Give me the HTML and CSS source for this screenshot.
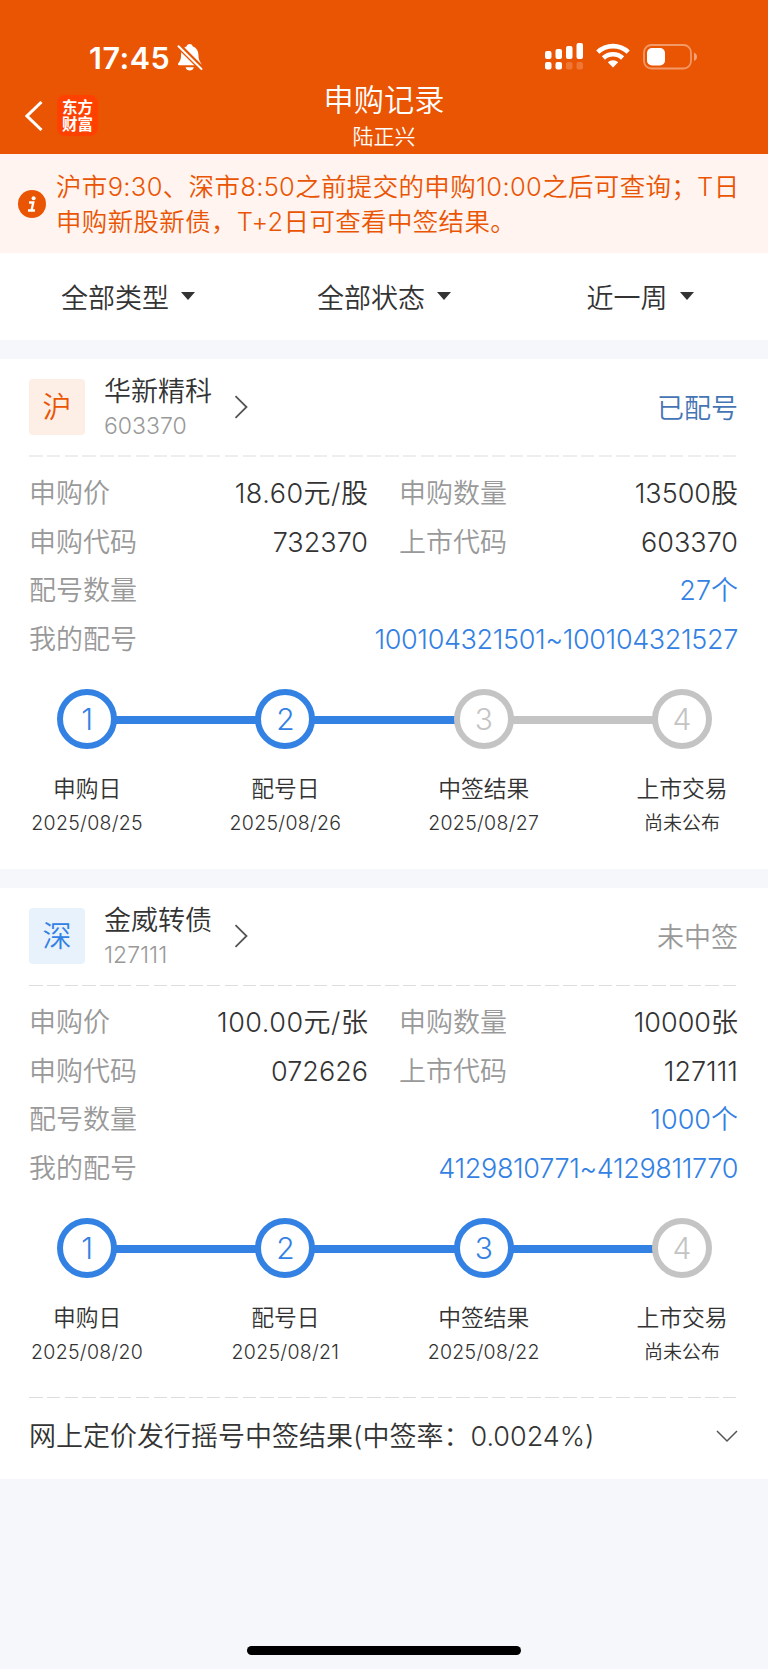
FILE: index.html
```html
<!DOCTYPE html>
<html lang="zh-CN">
<head>
    <meta charset="UTF-8">
    <title>申购记录</title>
    <link rel="stylesheet" href="styles.css">
</head>
<body>
<header class="header">
    <div class="status">
        <div class="status-left">
            <span class="time">17:45</span>
            <svg class="bell" width="26" height="28" viewBox="0 0 26 28">
                <path d="M1 20.500C1 18.500 4 17.500 4 12C4 7 6 3.500 9.500 2.500C10 .8 11.300 0 12.700 0C14.100 0 15.400 .8 15.900 2.500C19.500 3.500 21.500 7 21.500 12C21.500 17.500 24.400 18.500 24.400 20.500Q24.400 21.300 23 21.300H2.400Q1 21.300 1 20.500ZM8.600 23.300H16.800Q16 26.500 12.700 26.500T8.600 23.300Z" fill="#fff"/>
                <path d="M0 0L25 25" stroke="#ea5504" stroke-width="5.500"/>
                <path d="M1.500 2.300L24.500 25" stroke="#fff" stroke-width="2" stroke-linecap="round"/>
            </svg>
        </div>
        <div class="status-right">
            <svg width="38" height="27" viewBox="0 0 38 27" fill="#fff">
                <rect x="0" y="8" width="6.500" height="8" rx="2"/>
                <rect x="10.500" y="6" width="6.500" height="10" rx="2"/>
                <rect x="21" y="3" width="6.500" height="13" rx="2"/>
                <rect x="31.500" y="0" width="6.500" height="16" rx="2"/>
                <rect x="0" y="19" width="6.500" height="7.500" rx="2"/>
                <rect x="10.500" y="19" width="6.500" height="7.500" rx="2"/>
                <rect x="21" y="19" width="6.500" height="7.500" rx="2" opacity=".2"/>
                <rect x="31.500" y="19" width="6.500" height="7.500" rx="2" opacity=".2"/>
            </svg>
            <svg class="wifi" width="34" height="25" viewBox="0 0 34 25" fill="none" stroke="#fff" stroke-width="4.600">
                <path d="M1.800 9.200A22 22 0 0 1 32.200 9.200"/>
                <path d="M7.400 15A14 14 0 0 1 26.600 15"/>
                <path d="M17 24.500L11.800 19.300A7.500 7.500 0 0 1 22.200 19.300Z" fill="#fff" stroke="none"/>
            </svg>
            <svg class="battery" width="55" height="26" viewBox="0 0 55 26">
                <rect x="1" y="1" width="47" height="23.500" rx="7.500" fill="none" stroke="#fff" stroke-opacity=".4" stroke-width="1.800"/>
                <rect x="4" y="4" width="18" height="17.500" rx="5" fill="#fff"/>
                <path d="M51 8.500Q54 9.800 54 12.800T51 17Z" fill="#fff" fill-opacity=".45"/>
            </svg>
        </div>
    </div>
    <div class="nav">
        <div class="nav-left">
            <svg width="18" height="30" viewBox="0 0 18 30" fill="none" stroke="#fff" stroke-width="3">
                <path d="M16.500 1L2 15L16.500 29"/>
            </svg>
            <div class="logo">东方<br>财富</div>
        </div>
        <div class="title">
            <h1>申购记录</h1>
            <p>陆正兴</p>
        </div>
    </div>
</header>

<div class="notice">
    <svg width="28" height="28" viewBox="0 0 28 28">
        <circle cx="14" cy="14" r="14" fill="#ea5504"/>
        <circle cx="15.600" cy="8.300" r="2" fill="#fff"/>
        <path d="M11 12.500H15.300L13.500 20.500M10 20.500H17" fill="none" stroke="#fff" stroke-width="2.300"/>
    </svg>
    <p>沪市9:30、深市8:50之前提交的申购10:00之后可查询；T日<br>申购新股新债，T+2日可查看中签结果。</p>
</div>

<div class="filters">
    <div class="filter">全部类型<i class="caret"></i></div>
    <div class="filter">全部状态<i class="caret"></i></div>
    <div class="filter">近一周<i class="caret"></i></div>
</div>

<section class="card">
    <div class="card-head">
        <div class="market sh">沪</div>
        <div class="stock">
            <h2>华新精科</h2>
            <p>603370</p>
        </div>
        <svg class="arrow" width="14" height="24" viewBox="0 0 14 24" fill="none" stroke="#555" stroke-width="1.800">
            <path d="M1.500 1.200L12.500 12L1.500 22.800"/>
        </svg>
        <div class="state done">已配号</div>
    </div>
    <div class="dash"></div>
    <div class="info">
        <div class="row">
            <div class="cell"><span>申购价</span><b class="price">18.60元/股</b></div>
            <div class="cell"><span>申购数量</span><b>13500股</b></div>
        </div>
        <div class="row">
            <div class="cell"><span>申购代码</span><b>732370</b></div>
            <div class="cell"><span>上市代码</span><b>603370</b></div>
        </div>
        <div class="row"><span>配号数量</span><b class="blue">27个</b></div>
        <div class="row"><span>我的配号</span><b class="blue range">100104321501~100104321527</b></div>
    </div>
    <div class="steps">
        <div class="step on"><div class="dot">1</div><h3>申购日</h3><p>2025/08/25</p></div>
        <div class="step on"><div class="dot">2</div><h3>配号日</h3><p>2025/08/26</p></div>
        <div class="step"><div class="dot">3</div><h3>中签结果</h3><p>2025/08/27</p></div>
        <div class="step"><div class="dot">4</div><h3>上市交易</h3><p class="none">尚未公布</p></div>
    </div>
</section>

<section class="card">
    <div class="card-head">
        <div class="market sz">深</div>
        <div class="stock">
            <h2>金威转债</h2>
            <p>127111</p>
        </div>
        <svg class="arrow" width="14" height="24" viewBox="0 0 14 24" fill="none" stroke="#555" stroke-width="1.800">
            <path d="M1.500 1.200L12.500 12L1.500 22.800"/>
        </svg>
        <div class="state">未中签</div>
    </div>
    <div class="dash thin"></div>
    <div class="info">
        <div class="row">
            <div class="cell"><span>申购价</span><b class="price">100.00元/张</b></div>
            <div class="cell"><span>申购数量</span><b>10000张</b></div>
        </div>
        <div class="row">
            <div class="cell"><span>申购代码</span><b>072626</b></div>
            <div class="cell"><span>上市代码</span><b>127111</b></div>
        </div>
        <div class="row"><span>配号数量</span><b class="blue">1000个</b></div>
        <div class="row"><span>我的配号</span><b class="blue range">4129810771~4129811770</b></div>
    </div>
    <div class="steps">
        <div class="step on"><div class="dot">1</div><h3>申购日</h3><p>2025/08/20</p></div>
        <div class="step on"><div class="dot">2</div><h3>配号日</h3><p>2025/08/21</p></div>
        <div class="step on"><div class="dot">3</div><h3>中签结果</h3><p>2025/08/22</p></div>
        <div class="step"><div class="dot">4</div><h3>上市交易</h3><p class="none">尚未公布</p></div>
    </div>
    <div class="dash thin last"></div>
    <div class="result">
        <span>网上定价发行摇号中签结果(中签率：0.0024%)</span>
        <svg width="22" height="13" viewBox="0 0 22 13" fill="none" stroke="#555" stroke-width="1.500">
            <path d="M1 1L11 11L21 1"/>
        </svg>
    </div>
</section>

<div class="home-bar"></div>
</body>
</html>
```
FILE: styles.css
```css
* {
    box-sizing: border-box;
    margin: 0;
    padding: 0;
}
body {
    display: flex;
    flex-direction: column;
    height: 1669px;
    background: #f6f7fa;
    color: #333;
    font-family: Inter, "Noto Sans CJK SC", sans-serif;
    font-size: 27px;
    font-weight: 350;
    white-space: nowrap;
}
svg {
    display: block;
    flex: none;
}
h1, h2, h3, b {
    font-weight: inherit;
}

/* header */
.header {
    height: 154px;
    background: #ea5504;
    color: #fff;
}
.status {
    display: flex;
    justify-content: space-between;
    height: 84px;
    padding: 43px 70px 0 89px;
}
.status-left, .status-right {
    display: flex;
    align-items: flex-start;
}
.time {
    width: 88px;
    font-size: 30.5px;
    font-weight: 600;
    letter-spacing: .5px;
    line-height: 29px;
}
.bell {
    margin-top: 1px;
}
.wifi {
    margin: 0 13px;
}
.battery {
    margin-top: 1px;
}
.nav {
    display: grid;
    grid-template-columns: 200px 1fr 200px;
    height: 70px;
}
.nav-left {
    display: flex;
    align-items: flex-start;
    padding: 11px 0 0 25px;
    gap: 14px;
}
.nav-left svg {
    margin-top: 6px;
}
.logo {
    width: 41px;
    height: 41px;
    padding-top: 3px;
    border-radius: 8px;
    background: #ff4100;
    font-family: "Noto Sans CJK SC", sans-serif;
    font-size: 15.5px;
    font-weight: 700;
    line-height: 17px;
    text-align: center;
}
.title {
    text-align: center;
}
.title h1 {
    font-size: 30.2px;
    line-height: 33px;
}
.title p {
    font-size: 21px;
    line-height: 40px;
}

/* notice */
.notice {
    display: flex;
    align-items: center;
    gap: 10px;
    height: 99px;
    padding-left: 18px;
    background: #fff4ef;
    color: #ea5504;
    font-size: 25.5px;
    letter-spacing: .33px;
    line-height: 35px;
}

/* filters */
.filters {
    display: grid;
    grid-template-columns: repeat(3, 1fr);
    height: 87px;
    padding-bottom: 1px;
    background: #fff;
}
.filter {
    display: flex;
    align-items: center;
    justify-content: center;
}
.caret {
    margin-left: 12px;
    border: 7px solid transparent;
    border-top: 8px solid #333;
    border-bottom: 0;
}

/* cards */
.card {
    height: 510px;
    margin-top: 19px;
    padding: 0 30px 0 29px;
    background: #fff;
}
.card:last-of-type {
    height: 591px;
}
.card-head {
    display: flex;
    align-items: center;
    height: 96px;
}
.market {
    width: 56px;
    height: 56px;
    border-radius: 4px;
    font-size: 29px;
    line-height: 57px;
    text-align: center;
}
.sh {
    background: #fdeee6;
    color: #ea5504;
}
.sz {
    background: #e8f2fd;
    color: #3381e3;
}
.stock {
    width: 107px;
    margin-left: 19px;
    padding-top: 3px;
}
.stock h2 {
    font-size: 27px;
    line-height: 35px;
}
.stock p {
    color: #999;
    font-size: 23px;
    line-height: 34px;
}
.arrow {
    margin-left: 23px;
}
.state {
    margin-left: auto;
    padding-bottom: 2px;
    color: #999;
}
.state.done {
    color: #4574b4;
}
.dash {
    height: 2px;
    margin-right: 2px;
    background: repeating-linear-gradient(90deg, #eee 0 13.5px, transparent 13.5px 17.8px);
}
.dash.thin {
    height: 1px;
    margin-top: 1px;
    background: repeating-linear-gradient(90deg, #ddd 0 13.5px, transparent 13.5px 17.8px);
}
.dash.last {
    margin-top: 28px;
}
.info {
    padding-top: 13px;
    line-height: 48.6px;
}
.row, .cell {
    display: flex;
    justify-content: space-between;
}
.row {
    height: 48.6px;
}
.cell {
    width: 339px;
}
.row span {
    color: #999;
}
.cell + .cell {
    margin-left: 31px;
}
.row .blue {
    color: #3381e3;
}
.row .price {
    letter-spacing: .5px;
    margin-right: -.5px;
}
.row .range {
    letter-spacing: -.35px;
}
.steps {
    display: grid;
    grid-template-columns: repeat(4, 198.3px);
    margin: 24.6px 0 0 -41px;
}
.step {
    position: relative;
    text-align: center;
}
.dot {
    width: 60px;
    height: 60px;
    margin: 0 auto;
    border: 6px solid #c4c4c4;
    border-radius: 50%;
    color: #c4c4c4;
    font-size: 30px;
    font-weight: 300;
    line-height: 48px;
}
.on .dot {
    border-color: #3381e3;
    color: #3381e3;
}
/* connector to the next step */
.step:not(:last-child)::after {
    content: "";
    position: absolute;
    left: calc(50% + 29px);
    top: 27px;
    width: 141px;
    height: 8px;
    background: #c4c4c4;
}
.step.on::after {
    background: #3381e3;
}
.step h3 {
    margin-top: 23.5px;
    font-size: 22.8px;
    line-height: 34px;
}
.step p {
    font-size: 19.5px;
    letter-spacing: .3px;
    line-height: 35px;
}
.step .none {
    font-size: 19px;
    letter-spacing: 0;
}
.dash.last {
    margin-top: 27px;
}
.result {
    display: flex;
    align-items: center;
    justify-content: space-between;
    height: 80px;
    padding-bottom: 3px;
}
.result span {
    padding-bottom: 4px;
}
.home-bar {
    width: 274px;
    height: 9px;
    margin: auto auto 14px;
    border-radius: 5px;
    background: #000;
}
```
